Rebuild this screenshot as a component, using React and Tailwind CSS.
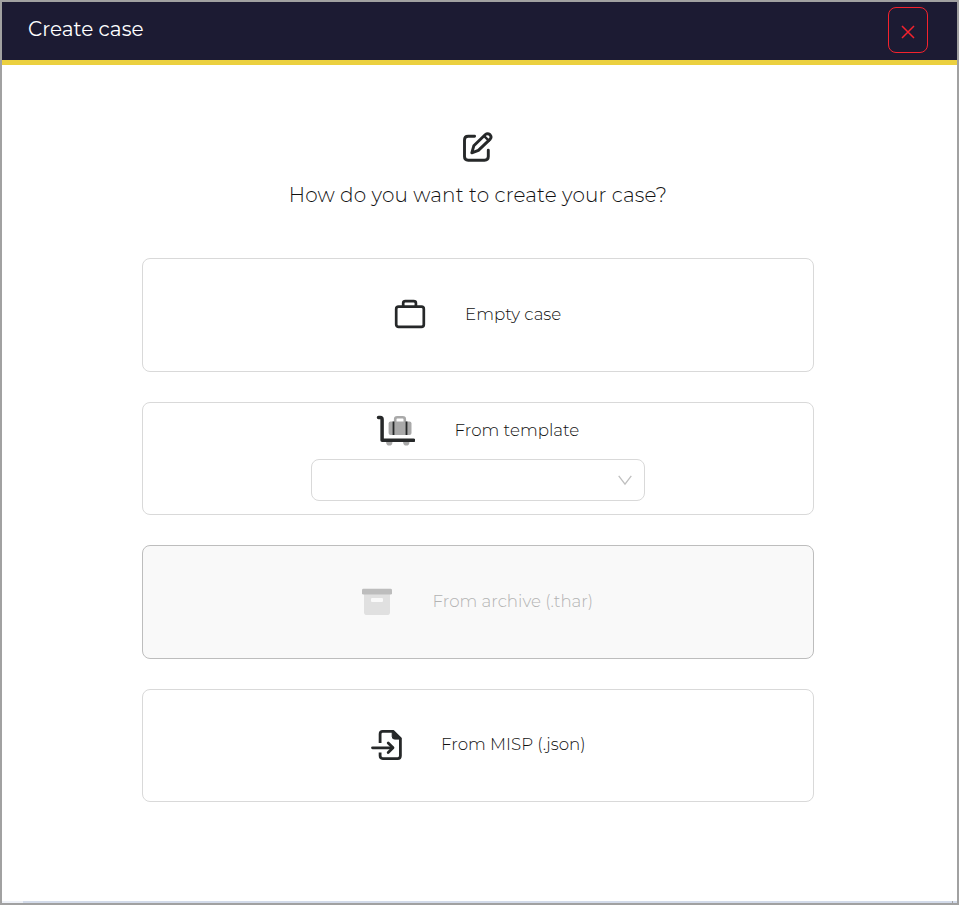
import React from "react";

function EditIcon() {
  return (
    <svg className="block h-8 w-8" viewBox="0 0 32 32" fill="none" stroke="#262829" strokeWidth="2.9" strokeLinecap="round" strokeLinejoin="round">
      <path d="M12.6 4.2H6.2Q2.5 4.2 2.5 8.1V24.6Q2.5 28.3 6.2 28.3H22.5Q26.3 28.3 26.3 24.6V18.2" />
      <path d="M9.8 20.8L11.8 13.8L23.4 2.5Q25.6.7 28 2.7Q30 5 28.2 7.1L16.4 18.4Z" />
      <path d="M22.2 4.2L26.8 8.6" strokeWidth="2.4" />
    </svg>
  );
}

function CaseIcon() {
  return (
    <svg className="block h-8 w-8" viewBox="0 0 32 32" fill="none" stroke="#262829" strokeWidth="2.7" strokeLinejoin="round">
      <rect x="2.2" y="7.7" width="27.6" height="20.2" rx="2.4" />
      <path d="M9.2 7.6V4Q9.2 2.1 11.3 2.1H19.6Q21.9 2.1 21.9 4V7.6" />
    </svg>
  );
}

function CartIcon() {
  return (
    <svg className="block h-8 w-10" viewBox="0 0 40 32" fill="none">
      <circle cx="14.3" cy="28.5" r="3.1" fill="#a9a9a9" />
      <circle cx="31.3" cy="28.5" r="3.1" fill="#a9a9a9" />
      <path d="M20.2 9V5.2Q20.2 3.2 22.2 3.2H27.6Q29.8 3.2 29.8 5.2V9" stroke="#a9a9a9" strokeWidth="2.6" />
      <rect x="13.6" y="7.6" width="22.9" height="13.4" rx="2" fill="#a9a9a9" />
      <path d="M18.5 7.6V21M31.5 7.6V21" stroke="#262829" strokeWidth="1.8" />
      <path d="M3.5 3.6H5.2Q7.1 3.6 7.1 5.5V26.2H38.6" stroke="#262829" strokeWidth="3.5" strokeLinecap="round" strokeLinejoin="round" />
    </svg>
  );
}

function ArchiveIcon() {
  return (
    <svg className="block h-8 w-8" viewBox="0 0 32 32">
      <path d="M3 8H29V26.2Q29 29 26.2 29H5.8Q3 29 3 26.2Z" fill="#e0e0e0" />
      <rect x="1" y="2.8" width="30" height="5.8" rx="1.4" fill="#bdbdbd" />
      <rect x="10" y="12" width="12" height="4" rx="1" fill="#f9f9f9" />
    </svg>
  );
}

function ImportIcon() {
  return (
    <svg className="block h-8 w-8" viewBox="0 0 32 32" fill="none" stroke="#262829" strokeWidth="2.8" strokeLinecap="butt" strokeLinejoin="round">
      <path d="M9.1 14V5Q9.1 2.3 11.7 2.3H22L29.4 9.5V26.8Q29.4 29.6 26.7 29.6H11.7Q9.1 29.6 9.1 26.8V23.5" />
      <path d="M21.2 2V7.5Q21.2 10.1 23.6 10.1H29.9L29.4 8.5L22.5 2Z" fill="#262829" strokeWidth="1" />
      <path d="M1.5 18.8H21.6" strokeLinecap="round" />
      <path d="M17.2 14L22 18.8L17.2 23.5" strokeLinecap="round" />
    </svg>
  );
}

export default function App() {
  return (
    <div className="flex h-[905px] w-[959px] flex-col border-2 border-[#a1a1a1] bg-white font-['Montserrat','Inter',sans-serif] font-light text-[#111111]">
      <header className="flex h-[63px] shrink-0 items-start justify-between border-b-[5px] border-[#ebd03f] bg-[#1c1b33] pr-[29px] pl-[26px]">
        <h1 className="mt-[13px] text-[20px] leading-[28px] font-normal whitespace-nowrap text-white">Create case</h1>
        <button aria-label="Close" className="mt-[5px] flex h-[46px] w-10 items-center justify-center rounded-lg border border-[#f5222d]">
          <svg className="mt-[4px] block h-4 w-4" viewBox="0 0 16 16" stroke="#f5222d" strokeWidth="1.5">
            <path d="M2 2L14 14M14 2L2 14" />
          </svg>
        </button>
      </header>

      <main className="flex grow flex-col items-center pr-[3px]">
        <div className="mt-[67px]"><EditIcon /></div>
        <h2 className="mt-[16px] text-[20px] leading-[30px] tracking-[0.13px] whitespace-nowrap">How do you want to create your case?</h2>

        <div className="mt-[48px] flex w-[672px] flex-col gap-[30px] text-[16.7px]">
          <div className="flex h-[114px] items-center rounded-lg border border-[#d9d9d9] pl-[251px]">
            <CaseIcon />
            <span className="mb-[2px] ml-[39px] leading-6 whitespace-nowrap">Empty case</span>
          </div>

          <div className="flex h-[113px] flex-col rounded-lg border border-[#d9d9d9]">
            <div className="mt-[11px] flex h-8 items-center pl-[232px]">
              <CartIcon />
              <span className="ml-[39.5px] leading-6 whitespace-nowrap">From template</span>
            </div>
            <div className="mt-[13px] ml-[168px] flex h-[42px] w-[334px] items-center justify-end rounded-lg border border-[#d9d9d9] pr-[11px]">
              <svg className="block h-4 w-4" viewBox="0 0 16 16" fill="none" stroke="#bfbfbf" strokeWidth="1.3">
                <path d="M1.7 3.8L8 12.2L14.3 3.8" />
              </svg>
            </div>
          </div>

          <div className="flex h-[114px] items-center rounded-lg border border-[#bdbdbd] bg-[#f9f9f9] pl-[218px] text-[#b3b3b3]">
            <ArchiveIcon />
            <span className="mb-[2px] ml-[39.5px] leading-6 whitespace-nowrap">From archive (.thar)</span>
          </div>

          <div className="flex h-[113px] items-center rounded-lg border border-[#d9d9d9] pb-px pl-[228px]">
            <ImportIcon />
            <span className="mb-[2px] ml-[38px] leading-6 whitespace-nowrap">From MISP (.json)</span>
          </div>
        </div>
      </main>
      <div className="flex h-[2px] shrink-0 bg-[#d3dbea]">
        <div className="w-[21px] bg-[#edf0f7]" />
        <div className="mr-[4px] ml-auto w-px bg-[#a1a1a1]" />
      </div>
    </div>
  );
}
